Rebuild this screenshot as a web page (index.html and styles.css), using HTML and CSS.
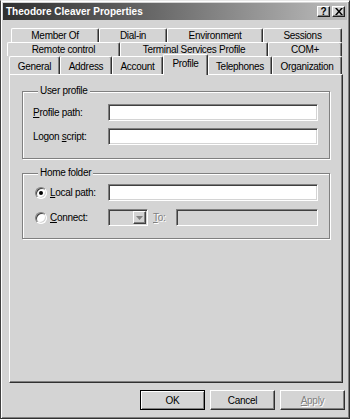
FILE: index.html
```html
<!DOCTYPE html>
<html>
<head>
<meta charset="utf-8">
<link rel="stylesheet" href="styles.css">
</head>
<body>
<div class="window">
  <div class="titlebar">
    <span class="title">Theodore Cleaver Properties</span>
    <div class="tbtns">
      <span class="tbtn help">?</span>
      <span class="tbtn close"><svg width="8" height="7" viewBox="0 0 8 7"><path d="M0 0h2l2 2.5L6 0h2L5 3.5 8 7H6L4 4.5 2 7H0l3-3.5z" fill="#000"/></svg></span>
    </div>
  </div>
  <div class="tabs">
    <div class="row r1">
      <span class="tab w-member">Member Of</span>
      <span class="tab w-dial">Dial-in</span>
      <span class="tab w-env">Environment</span>
      <span class="tab w-sess">Sessions</span>
    </div>
    <div class="row r2">
      <span class="tab w-remote">Remote control</span>
      <span class="tab w-tsp">Terminal Services Profile</span>
      <span class="tab w-com">COM+</span>
    </div>
    <div class="row r3">
      <span class="tab w-gen">General</span>
      <span class="tab w-addr">Address</span>
      <span class="tab w-acct">Account</span>
      <span class="tab w-prof active">Profile</span>
      <span class="tab w-tel">Telephones</span>
      <span class="tab w-org">Organization</span>
    </div>
  </div>
  <div class="panel">
    <fieldset class="group g1">
      <legend>User profile</legend>
      <div class="field">
        <span class="lbl"><u>P</u>rofile path:</span>
        <span class="input"></span>
      </div>
      <div class="field">
        <span class="lbl">Logon <u>s</u>cript:</span>
        <span class="input"></span>
      </div>
    </fieldset>
    <fieldset class="group g2">
      <legend>Home folder</legend>
      <div class="field">
        <span class="lbl radio-lbl"><span class="radio on"></span><span><u>L</u>ocal path:</span></span>
        <span class="input"></span>
      </div>
      <div class="field">
        <span class="lbl radio-lbl"><span class="radio"></span><span><u>C</u>onnect:</span></span>
        <span class="combo"><span class="drop"><svg width="7" height="4" viewBox="0 0 7 4"><path d="M0 0h7L3.5 4z" fill="#808080"/></svg></span></span>
        <span class="to disabled"><u>T</u>o:</span>
        <span class="input dis grow"></span>
      </div>
    </fieldset>
  </div>
  <div class="buttons">
    <span class="btn default"><span>OK</span></span>
    <span class="btn"><span>Cancel</span></span>
    <span class="btn"><span class="disabled"><u>A</u>pply</span></span>
  </div>
</div>
</body>
</html>
```
FILE: styles.css
```css
* { box-sizing: border-box; }
html, body { margin: 0; padding: 0; background: #d4d4d4; }
body {
  font-family: "Liberation Sans", Arial, sans-serif;
  font-size: 10px;
  letter-spacing: -0.3px;
  color: #000;
}
.window {
  width: 350px;
  height: 419px;
  background: #d4d4d4;
  border-left: 1px solid #404040;
  border-top: 1px solid #e8e8e8;
  border-right: 1px solid #303030;
  border-bottom: 1px solid #303030;
  box-shadow: inset 1px 1px 0 #ffffff, inset -1px -1px 0 #808080;
  padding: 2px 2px 2px 2px;
  display: flex;
  flex-direction: column;
}
.titlebar {
  height: 17px;
  background: linear-gradient(to right, #303030 0%, #6a6a6a 45%, #bdbdbd 100%);
  display: flex;
  align-items: center;
  justify-content: space-between;
  padding: 0 2px 0 3px;
}
.title {
  color: #fff;
  font-weight: bold;
  font-size: 10px;
  letter-spacing: 0;
}
.tbtns { display: flex; gap: 1px; }
.tbtn {
  width: 13px;
  height: 11px;
  background: #d4d4d4;
  border-top: 1px solid #fff;
  border-left: 1px solid #fff;
  border-right: 1px solid #202020;
  border-bottom: 1px solid #202020;
  box-shadow: inset -1px -1px 0 #808080;
  display: flex;
  align-items: center;
  justify-content: center;
  font-weight: bold;
  font-size: 10px;
  line-height: 1;
}
.tbtn.close { margin-left: 1px; }
.tabs {
  margin-top: 8px;
  display: flex;
  flex-direction: column;
}
.row { display: flex; }
.r1 { height: 14px; margin-left: 8px; }
.r2 { height: 14px; margin-left: 4px; }
.r3 { height: 18px; margin-left: 6px; position: relative; z-index: 2; }
.tab {
  background: #d4d4d4;
  border-top: 1px solid #fff;
  border-left: 1px solid #fff;
  border-right: 1px solid #303030;
  border-radius: 2px 2px 0 0;
  box-shadow: inset -1px 0 0 #808080;
  display: flex;
  align-items: center;
  justify-content: center;
  white-space: nowrap;
  padding-bottom: 1px;
}
.r3 .tab { padding-top: 2px; }
.tab.active {
  margin-top: -2px;
  height: 21px;
  padding-top: 0;
  padding-bottom: 4px;
}
.w-member { width: 88px; }
.w-dial { width: 68px; }
.w-env { width: 96px; }
.w-sess { width: 79px; }
.w-remote { width: 113px; }
.w-tsp { width: 148px; }
.w-com { width: 74px; }
.w-gen { width: 51px; }
.w-addr { width: 52px; }
.w-acct { width: 51px; }
.w-prof { width: 45px; }
.w-tel { width: 64px; }
.w-org { width: 70px; }
.panel {
  margin-left: 6px;
  width: 334px;
  height: 309px;
  border-top: 1px solid #fff;
  border-left: 1px solid #fff;
  border-right: 1px solid #303030;
  border-bottom: 1px solid #303030;
  box-shadow: inset -1px -1px 0 #808080;
  padding: 10px 12px 0 12px;
  display: flex;
  flex-direction: column;
  gap: 8px;
}
.group {
  margin: 0;
  border: 1px solid #808080;
  box-shadow: inset 1px 1px 0 #fff, 1px 1px 0 #fff;
  padding: 7px 11px 13px 10px;
  display: flex;
  flex-direction: column;
  gap: 7px;
}
.g2 { padding-top: 5px; padding-bottom: 12px; gap: 8px; }
legend {
  background: #d4d4d4;
  padding: 0 2px;
  margin-left: 5px;
  line-height: 12px;
}
.field {
  display: flex;
  align-items: center;
  height: 17px;
}
.lbl { width: 75px; flex: none; }
.radio-lbl { display: flex; align-items: center; margin-left: 2px; width: 73px; }
.radio {
  width: 12px;
  height: 12px;
  border-radius: 50%;
  background: #fff;
  border: 1px solid;
  border-color: #808080 #fff #fff #808080;
  box-shadow: inset 1px 1px 0 #404040, inset -1px -1px 0 #d4d4d4;
  margin-right: 3px;
  position: relative;
  flex: none;
}
.radio.on::after {
  content: "";
  position: absolute;
  left: 3px;
  top: 3px;
  width: 4px;
  height: 4px;
  border-radius: 50%;
  background: #000;
}
.input {
  width: 210px;
  height: 17px;
  background: #fff;
  border-top: 1px solid #808080;
  border-left: 1px solid #808080;
  border-right: 1px solid #fff;
  border-bottom: 1px solid #fff;
  box-shadow: inset 1px 1px 0 #404040, inset -1px -1px 0 #d4d4d4;
}
.input.dis { background: #d4d4d4; }
.input.grow { width: 142px; }
.combo {
  width: 40px;
  height: 17px;
  background: #d4d4d4;
  border-top: 1px solid #808080;
  border-left: 1px solid #808080;
  border-right: 1px solid #fff;
  border-bottom: 1px solid #fff;
  box-shadow: inset 1px 1px 0 #404040;
  display: flex;
  justify-content: flex-end;
  padding: 1px 1px 1px 1px;
}
.drop {
  width: 13px;
  height: 13px;
  background: #d4d4d4;
  border-top: 1px solid #fff;
  border-left: 1px solid #fff;
  border-right: 1px solid #404040;
  border-bottom: 1px solid #404040;
  box-shadow: inset -1px -1px 0 #808080;
  display: flex;
  align-items: center;
  justify-content: center;
}
.to { margin-left: 5px; width: 23px; }
.disabled { color: #808080; text-shadow: 1px 1px 0 #fff; }
.buttons {
  margin-top: 7px;
  display: flex;
  justify-content: flex-end;
  gap: 5px;
  padding-right: 2px;
}
.btn {
  width: 65px;
  height: 20px;
  background: #d4d4d4;
  border-top: 1px solid #fff;
  border-left: 1px solid #fff;
  border-right: 1px solid #303030;
  border-bottom: 1px solid #303030;
  box-shadow: inset -1px -1px 0 #808080;
  display: flex;
  align-items: center;
  justify-content: center;
}
.btn.default {
  border: 1px solid #000;
  box-shadow: inset 1px 1px 0 #fff, inset -1px -1px 0 #808080;
}
```
